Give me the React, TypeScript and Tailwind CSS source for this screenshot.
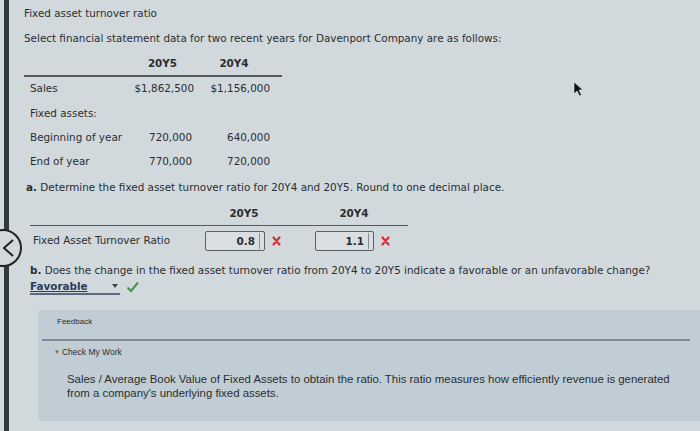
import React from "react";

const V = { fontFamily: '"DejaVu Sans", Verdana, sans-serif' };
const A = { fontFamily: '"Liberation Sans", Arial, sans-serif' };

function RedX() {
  return (
    <svg width="9" height="10" viewBox="0 0 9 10">
      <path d="M1.5 1.5 L7.5 8.5 M7.5 1.5 L1.5 8.5" stroke="#d42e3a" strokeWidth="2.2" strokeLinecap="round" />
    </svg>
  );
}

export default function App() {
  return (
    <div className="relative w-[700px] h-[431px] overflow-hidden bg-[#d2d9dd] text-[#2a2d30]" style={V}>
      {/* bezel line */}
      <div className="absolute left-[4px] top-0 w-[5px] h-[431px] bg-[#34373b]" />
      {/* back button circle */}
      <div className="absolute left-[-16px] top-[229px] w-[38px] h-[38px] rounded-full border-[2px] border-[#222] bg-[#d2d9dd] flex items-center justify-end pr-[6px]">
        <svg width="12" height="18" viewBox="0 0 12 18"><path d="M11 1 L2 9 L11 17" fill="none" stroke="#222" strokeWidth="2" /></svg>
      </div>
      {/* cursor */}
      <svg className="absolute left-[573px] top-[81px]" width="12" height="16" viewBox="0 0 12 16">
        <path d="M1 1 L1 13 L4 10 L6.5 15 L8.5 14 L6 9 L10 9 Z" fill="#111" stroke="#eee" strokeWidth="0.6" />
      </svg>

      <div className="pl-[24px] pt-[5px] text-[10.4px]">
        <div className="h-[16px] leading-[16px]">Fixed asset turnover ratio</div>
        <div className="mt-[9px] h-[16px] leading-[16px]">Select financial statement data for two recent years for Davenport Company are as follows:</div>

        {/* table 1 */}
        <div className="mt-[10px] w-[258px]">
          <div className="flex h-[14px] leading-[14px] font-bold">
            <div className="w-[106px]" />
            <div className="w-[65px] text-center">20Y5</div>
            <div className="w-[78px] text-center">20Y4</div>
          </div>
          <div className="mt-[5px] h-[1.5px] bg-[#55595c]" />
          <div className="flex h-[25px] items-center pl-[6px]">
            <div className="w-[103px]">Sales</div>
            <div className="w-[61px] text-right">$1,862,500</div>
            <div className="w-[76px] text-right">$1,156,000</div>
          </div>
          <div className="flex h-[24px] items-center pl-[6px]">Fixed assets:</div>
          <div className="flex h-[24px] items-center pl-[6px]">
            <div className="w-[103px]">Beginning of year</div>
            <div className="w-[59px] text-right">720,000</div>
            <div className="w-[78px] text-right">640,000</div>
          </div>
          <div className="flex h-[24px] items-center pl-[6px]">
            <div className="w-[103px]">End of year</div>
            <div className="w-[59px] text-right">770,000</div>
            <div className="w-[78px] text-right">720,000</div>
          </div>
        </div>

        <div className="mt-[5px] pl-[2px] h-[16px] leading-[16px]"><b>a.</b> Determine the fixed asset turnover ratio for 20Y4 and 20Y5. Round to one decimal place.</div>

        {/* table 2 */}
        <div className="mt-[11px] ml-[6px] w-[378px]">
          <div className="flex h-[14px] leading-[14px] font-bold">
            <div className="w-[174px]" />
            <div className="w-[80px] text-center">20Y5</div>
            <div className="w-[50px]" />
            <div className="w-[40px] text-center">20Y4</div>
          </div>
          <div className="mt-[5px] h-[1.5px] bg-[#55595c]" />
          <div className="flex items-center h-[25px] mt-[2px]">
            <div className="w-[175px] pl-[3px]">Fixed Asset Turnover Ratio</div>
            <div className="w-[60px] h-[20px] border border-[#5c6064] rounded-[2px] bg-[#d8dee1] flex items-center justify-end pr-[4px] font-bold">
              <span className="border-r border-[#8a8e91] pr-[4px] leading-[16px]">0.8</span>
            </div>
            <div className="w-[50px] pl-[7px] flex items-center"><RedX /></div>
            <div className="w-[59px] h-[20px] border border-[#5c6064] rounded-[2px] bg-[#d8dee1] flex items-center justify-end pr-[4px] font-bold">
              <span className="border-r border-[#8a8e91] pr-[4px] leading-[16px]">1.1</span>
            </div>
            <div className="pl-[7px] flex items-center"><RedX /></div>
          </div>
        </div>

        <div className="mt-[9px] pl-[6px] h-[16px] leading-[16px]"><b>b.</b> Does the change in the fixed asset turnover ratio from 20Y4 to 20Y5 indicate a favorable or an unfavorable change?</div>
        <div className="mt-[0px] ml-[6px] flex items-center h-[18px]">
          <div className="w-[90px] h-[15px] flex items-center justify-between border-b-[2px] border-[#5a6a80] text-[#2a3a5a]">
            <span className="font-bold underline leading-[13px]">Favorable</span>
            <svg width="8" height="6" viewBox="0 0 8 6" className="mr-[1px]"><path d="M1 1 L7 1 L4 5 Z" fill="#444" /></svg>
          </div>
          <svg className="ml-[6px]" width="13" height="12" viewBox="0 0 13 12"><path d="M1.5 6.5 L5 10 L12 1.5" fill="none" stroke="#3b9a4a" strokeWidth="2" /></svg>
        </div>
      </div>

      {/* feedback */}
      <div className="absolute left-[38px] top-[310px] w-[680px] h-[111px] bg-[#c1cdd4] rounded-[3px]" style={A}>
        <div className="pl-[19px] pt-[5px] text-[8px] h-[20px] leading-[14px]">Feedback</div>
        <div className="ml-[4px] mr-[28px] mt-[9px] h-[1.5px] bg-[#7d8a92]" />
        <div className="pl-[16px] mt-[4px] text-[8.5px] h-[14px] leading-[14px] flex items-center gap-[2px]">
          <span className="text-[6px] text-[#666]">▼</span>Check My Work
        </div>
        <div className="pl-[29px] mt-[13px] text-[11.4px] leading-[14px] w-[670px]">
          Sales / Average Book Value of Fixed Assets to obtain the ratio. This ratio measures how efficiently revenue is generated<br />
          from a company's underlying fixed assets.
        </div>
      </div>
    </div>
  );
}
